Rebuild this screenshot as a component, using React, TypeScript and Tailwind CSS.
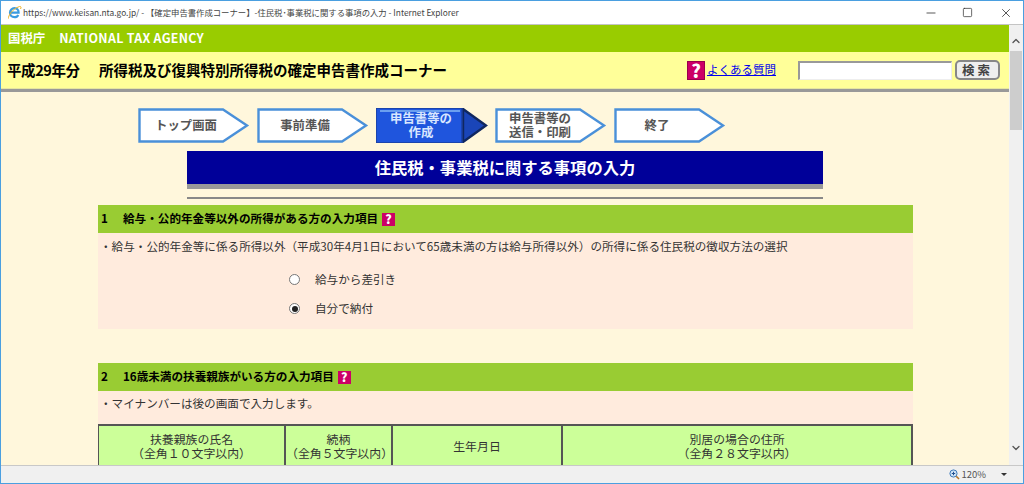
import { ChevronDown, ChevronUp, Minus, Square, X } from "lucide-react";

const font = { fontFamily: '"Noto Sans CJK JP", "Noto Sans", sans-serif' };

const steps = [
  { lines: ["トップ画面"], pad: "pr-[16px]", active: false },
  { lines: ["事前準備"], pad: "pr-[16px]", active: false },
  { lines: ["申告書等の", "作成"], pad: "pr-[22px]", active: true },
  { lines: ["申告書等の", "送信・印刷"], pad: "pr-[22px]", active: false },
  { lines: ["終了"], pad: "pr-[26px]", active: false },
];

function HelpIcon({ big }: { big?: boolean }) {
  return (
    <span
      className={
        big
          ? "inline-flex h-[19px] w-[18px] items-center justify-center border border-[#99004d] bg-[#cc0066] text-[18px] leading-none font-black text-white"
          : "inline-flex h-[13px] w-[13px] items-center justify-center bg-[#cc0066] text-[12px] leading-none font-black text-white"
      }
    >
      ?
    </span>
  );
}

function Step({ lines, active, pad }: { lines: string[]; active: boolean; pad: string }) {
  return (
    <div className={`relative flex h-[35px] w-[112px] items-center ${pad}`}>
      <svg className="absolute inset-0" width="112" height="35" viewBox="0 0 112 35">
        {active ? (
          <>
            <polygon points="0,0 86,0 111,17.5 86,35 0,35" fill="#1f55dd" />
            <polygon points="87,1 110,17.5 87,34" fill="#1a45b8" stroke="#10275f" strokeWidth="2.4" />
            <polygon points="0,0 86,0 86,35 0,35" fill="#1f55dd" stroke="#1b3f9e" strokeWidth="1.5" />
            <line x1="4" y1="3" x2="84" y2="3" stroke="#86b8f5" strokeWidth="1.6" />
          </>
        ) : (
          <polygon
            points="1.5,1.5 85,1.5 109,17.5 85,33.5 1.5,33.5"
            fill="#ffffff"
            stroke="#4a90d9"
            strokeWidth="2.4"
          />
        )}
      </svg>
      <div
        className={
          active
            ? "relative w-full text-center text-[12.4px] leading-[13.5px] font-bold text-[#d8e6ff]"
            : "relative w-full text-center text-[12.4px] leading-[13.5px] font-bold text-[#555555]"
        }
      >
        {lines.map((line) => (
          <div key={line}>{line}</div>
        ))}
      </div>
    </div>
  );
}

function SectionHead({ children }: { children: React.ReactNode }) {
  return (
    <div className="flex h-[28px] items-center gap-[4px] bg-[#99cc33] pl-[3px] text-[11.6px] font-bold text-black">
      {children}
      <HelpIcon />
    </div>
  );
}

function Radio({ checked, label }: { checked?: boolean; label: string }) {
  return (
    <div className="flex h-[29px] items-center pl-[191px] text-[11.6px] text-[#333333]">
      <span className="flex h-[11px] w-[11px] items-center justify-center rounded-full border border-[#777777] bg-white">
        {checked && <span className="h-[6px] w-[6px] rounded-full bg-[#222222]" />}
      </span>
      <span className="ml-[15px]">{label}</span>
    </div>
  );
}

const columns = [
  { w: "w-[187px]", a: "扶養親族の氏名", b: "（全角１０文字以内）" },
  { w: "w-[107px]", a: "続柄", b: "（全角５文字以内）" },
  { w: "w-[170px]", a: "生年月日", b: "" },
  { w: "flex-1", a: "別居の場合の住所", b: "（全角２８文字以内）" },
];

export default function App() {
  return (
    <div
      className="flex h-[484px] w-[1024px] flex-col overflow-hidden border border-[#4a9fe0] bg-white"
      style={font}
    >
      <div className="flex h-[24px] shrink-0 items-center border-b border-[#c4c4c4] pl-[6px] text-[8.35px] text-[#444444]">
        <svg width="15" height="15" viewBox="0 0 15 15" className="mr-[1px]">
          <path
            d="M3.2 7.6H11.6C11.6 4.9 9.7 3.2 7.4 3.2C5 3.2 3 5.1 3 7.8C3 10.5 5 12.2 7.4 12.2C9.2 12.2 10.6 11.3 11.3 9.9"
            fill="none"
            stroke="#3a9be0"
            strokeWidth="2.2"
          />
          <path d="M1.5 13.5C1 11 5 4 12.5 1.5C14 1 14.5 2.5 13.5 4" fill="none" stroke="#f0b429" strokeWidth="1" />
        </svg>
        <span className="whitespace-nowrap">
          https://www.keisan.nta.go.jp/ - 【確定申告書作成コーナー】-住民税･事業税に関する事項の入力 - Internet Explorer
        </span>
        <div className="ml-auto flex items-center text-[#333333]">
          <Minus size={14} strokeWidth={1.4} className="mr-[24px]" />
          <Square size={11} strokeWidth={1.6} className="mr-[26px]" />
          <X size={14} strokeWidth={1.4} className="mr-[10px]" />
        </div>
      </div>

      <div className="flex min-h-0 flex-1">
        <div className="min-w-0 flex-1 overflow-hidden bg-[#fff7dc]">
          <div className="flex h-[27px] items-center gap-[14px] bg-[#99cc00] pl-[7px] text-[12.4px] font-bold text-white">
            <span>国税庁</span>
            <span className="tracking-[0.3px]">NATIONAL TAX AGENCY</span>
          </div>
          <div className="flex h-[37px] items-center border-b border-[#e6e6a0] bg-[#ffff99] pl-[6px] text-[14.5px] font-bold text-black">
            <span className="w-[92px] tracking-[-0.4px]">平成29年分</span>
            <span>所得税及び復興特別所得税の確定申告書作成コーナー</span>
            <div className="ml-[240px] flex items-center">
              <HelpIcon big />
              <a className="ml-[2px] text-[11.5px] font-normal text-[#0000ee] underline">よくある質問</a>
              <div className="ml-[22px] h-[19px] w-[154px] border border-t-2 border-l-2 border-[#999999] border-r-[#eeeeee] border-b-[#eeeeee] bg-white" />
              <button className="ml-[3px] flex h-[20px] w-[45px] items-center justify-center rounded-[5px] border-2 border-[#888888] bg-[#eeeeee] text-[12.5px] font-bold tracking-[3px] text-[#444444]">
                検索
              </button>
            </div>
          </div>
          <div className="h-[3px] bg-[#999999]" />

          <div className="mt-[16px] ml-[137px] flex gap-[7px]">
            {steps.map((step) => (
              <Step key={step.lines.join()} lines={step.lines} active={step.active} pad={step.pad} />
            ))}
          </div>

          <div className="mt-[8px] ml-[186px] w-[636px]">
            <div className="flex h-[33px] items-center justify-center bg-[#000099] text-[16.3px] font-bold text-white">
              住民税・事業税に関する事項の入力
            </div>
            <div className="h-[5px] bg-[#999999]" />
            <div className="mt-[8px] h-[2px] bg-[#888888]" />
          </div>

          <div className="mt-[6px] ml-[97px] w-[815px]">
            <SectionHead>
              <span className="w-[18px]">1</span>
              <span>給与・公的年金等以外の所得がある方の入力項目</span>
            </SectionHead>
            <div className="h-[96px] bg-[#ffebdd] pt-[4px]">
              <div className="pl-[2px] text-[11.6px] leading-[18px] whitespace-nowrap text-[#333333]">
                ・給与・公的年金等に係る所得以外（平成30年4月1日において65歳未満の方は給与所得以外）の所得に係る住民税の徴収方法の選択
              </div>
              <div className="mt-[10px]">
                <Radio label="給与から差引き" />
                <Radio checked label="自分で納付" />
              </div>
            </div>

            <div className="mt-[34px]">
              <SectionHead>
                <span className="w-[18px]">2</span>
                <span>16歳未満の扶養親族がいる方の入力項目</span>
              </SectionHead>
              <div className="h-[33px] bg-[#ffebdd] pt-[3px] pl-[2px] text-[11.6px] leading-[18px] text-[#333333]">
                ・マイナンバーは後の画面で入力します。
              </div>
              <div className="flex h-[50px] border-t-2 border-l border-[#555555] bg-[#ccff99]">
                {columns.map((col) => (
                  <div
                    key={col.a}
                    className={`${col.w} flex flex-col items-center justify-center border-r-2 border-[#555555] pb-[8px] text-[11.9px] leading-[14.5px] text-[#333333]`}
                  >
                    <div>{col.a}</div>
                    {col.b && <div>{col.b}</div>}
                  </div>
                ))}
              </div>
            </div>
          </div>
        </div>

        <div className="flex w-[14px] shrink-0 flex-col bg-[#f0f0f0]">
          <div className="flex h-[26px] items-center justify-center pt-[6px] text-[#555555]">
            <ChevronUp size={12} strokeWidth={2.6} />
          </div>
          <div className="mr-[1px] ml-[1px] h-[79px] bg-[#cdcdcd]" />
          <div className="mt-auto mb-[9px] flex h-[17px] items-center justify-center text-[#555555]">
            <ChevronDown size={12} strokeWidth={2.6} />
          </div>
        </div>
      </div>

      <div className="flex h-[18px] shrink-0 items-center justify-end border-t border-[#c8c8c8] bg-[#f0f0f0] pr-[8px] text-[9.5px] text-[#555555]">
        <svg width="11" height="11" viewBox="0 0 11 11" className="mr-[1px]">
          <circle cx="4.5" cy="4.5" r="3.6" fill="#cfe4f7" stroke="#3a78b8" />
          <path d="M2.8 4.5H6.2M4.5 2.8V6.2" stroke="#1f4f8f" />
          <path d="M7.2 7.2L10 10" stroke="#b5762a" strokeWidth="1.6" />
        </svg>
        <span>120%</span>
        <span className="mr-[8px] ml-[15px] h-0 w-0 border-x-[3px] border-t-[3px] border-x-transparent border-t-[#333333]" />
      </div>
    </div>
  );
}
